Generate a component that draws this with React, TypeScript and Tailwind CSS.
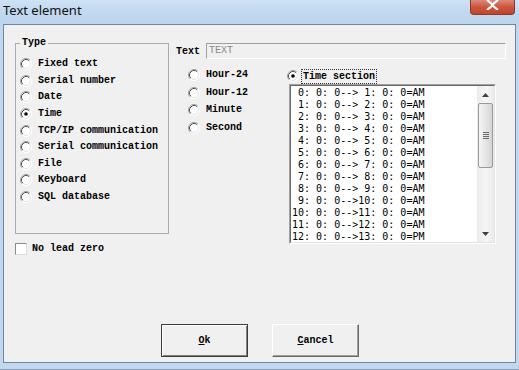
import React from "react";

const mono = "font-['Liberation_Mono',monospace] text-[10px] leading-[12px] text-black font-bold";

function Radio({ checked = false }: { checked?: boolean }) {
  return (
    <svg width="12" height="12" viewBox="0 0 12 12" className="shrink-0">
      <circle cx="6" cy="6" r="5.5" fill="#ffffff" />
      <path d="M2.11 9.89 A5.5 5.5 0 0 1 9.89 2.11" fill="none" stroke="#a0a0a0" strokeWidth="1" />
      <path d="M9.89 2.11 A5.5 5.5 0 0 1 2.11 9.89" fill="none" stroke="#ffffff" strokeWidth="1" />
      <path d="M2.82 9.18 A4.5 4.5 0 0 1 9.18 2.82" fill="none" stroke="#505050" strokeWidth="1" />
      <path d="M9.18 2.82 A4.5 4.5 0 0 1 2.82 9.18" fill="none" stroke="#e3e3e3" strokeWidth="1" />
      {checked && <circle cx="6" cy="6" r="1.8" fill="#000000" />}
    </svg>
  );
}

function RadioRow({ label, checked = false, h }: { label: string; checked?: boolean; h: string }) {
  return (
    <div className={`flex items-center ${h}`}>
      <Radio checked={checked} />
      <span className={`${mono} ml-[6px] whitespace-pre`}>{label}</span>
    </div>
  );
}

const types = [
  "Fixed text",
  "Serial number",
  "Date",
  "Time",
  "TCP/IP communication",
  "Serial communication",
  "File",
  "Keyboard",
  "SQL database",
];

const pad = (n: number) => (n < 10 ? " " + n : "" + n);
const rows = Array.from({ length: 13 }, (_, i) =>
  `${pad(i)}: 0: 0-->${pad(i + 1)}: 0: 0=${i + 1 <= 12 ? "AM" : "PM"}`
);

function Arrow({ up }: { up: boolean }) {
  return (
    <svg width="7" height="4" viewBox="0 0 7 4">
      {up ? <path d="M0 4 L3.5 0 L7 4 Z" fill="#404040" /> : <path d="M0 0 L3.5 4 L7 0 Z" fill="#404040" />}
    </svg>
  );
}

export default function App() {
  return (
    <div className="w-[519px] h-[370px] bg-[#c3d8ee] flex flex-col overflow-hidden border-b border-[#8aa2bc]">
      {/* title bar */}
      <div className="h-[24px] shrink-0 flex items-start bg-gradient-to-b from-[#cfe2f6] via-[#c1d8f0] to-[#bdd4ed]">
        <span className="pl-[3px] pt-[2px] text-[13px] leading-[17px] font-['Noto_Sans',sans-serif] text-[#111]">
          Text element
        </span>
        <div className="ml-auto mr-[4px] w-[45px] h-[15px] rounded-b-[4px] border border-t-0 border-[#8b3b2e] bg-gradient-to-b from-[#dc8878] via-[#cc5540] to-[#c0432c] flex items-start justify-center">
          <svg width="13" height="10" viewBox="0 0 13 10">
            <path d="M1 0 L6.5 4.5 L12 0 M1 10 L6.5 5.5 L12 10" stroke="#ffffff" strokeWidth="2.2" fill="none" />
          </svg>
        </div>
      </div>

      {/* client area */}
      <div className="mx-[3px] h-[339px] shrink-0 border border-[#6d87a3] bg-[#f0f0f0] flex flex-col">
        <div className="flex items-start pl-[11px]">
          {/* left column */}
          <div className="mt-[12px] flex flex-col w-[154px]">
            <fieldset className="w-[154px] h-[197px] border border-[#a9adb2]">
              <legend className={`${mono} ml-[4px] px-[2px]`}>Type</legend>
              <div className="pt-[7px] pl-[4px] flex flex-col">
                {types.map((t) => (
                  <RadioRow key={t} label={t} checked={t === "Time"} h="h-[16.6px]" />
                ))}
              </div>
            </fieldset>
            <div className="mt-[9px] flex items-center h-[12px]">
              <div className="w-[12px] h-[12px] bg-white border-t border-l border-[#8a8a8a] border-b border-r border-b-[#dcdcdc] border-r-[#dcdcdc]" />
              <span className={`${mono} ml-[5px]`}>No lead zero</span>
            </div>
          </div>

          {/* right column */}
          <div className="mt-[18px] ml-[7px] flex flex-col">
            <div className="flex items-center h-[16px]">
              <span className={`${mono} w-[30px] pt-[1px]`}>Text</span>
              <div className="w-[300px] h-[16px] border-t border-l border-[#a0a0a0] border-b border-r border-b-[#ffffff] border-r-[#ffffff] bg-[#f0f0f0] flex items-center">
                <span className="font-['Liberation_Mono',monospace] text-[10px] leading-[12px] text-[#8a8a8a] pl-[2px]">
                  TEXT
                </span>
              </div>
            </div>

            <div className="flex items-start">
              <div className="w-[111px] pl-[12px] pt-[7px] flex flex-col">
                {["Hour-24", "Hour-12", "Minute", "Second"].map((t) => (
                  <RadioRow key={t} label={t} h="h-[17.7px]" />
                ))}
              </div>
              <div className="flex flex-col pt-[9px]">
                <div className="flex items-center h-[16px]">
                  <Radio checked />
                  <span className={`${mono} ml-[2px] border border-dotted border-[#333] px-[1px] leading-[13px]`}>
                    Time section
                  </span>
                </div>
                <div className="ml-[2px] w-[207px] h-[160px] border-t border-l border-[#a0a0a0] border-b border-r border-b-white border-r-white">
                  <div className="w-full h-full border-t border-l border-[#696969] border-b border-r border-b-[#e3e3e3] border-r-[#e3e3e3] bg-white flex">
                    <div className="flex-1 pl-[1px] pt-[1px] flex flex-col overflow-hidden">
                      {rows.map((r, i) => (
                        <div
                          key={i}
                          className="font-['DejaVu_Sans_Mono',monospace] text-[10px] leading-[12px] h-[12px] whitespace-pre text-black"
                        >
                          {r}
                        </div>
                      ))}
                    </div>
                    <div className="w-[17px] h-full flex flex-col bg-gradient-to-r from-[#ebebeb] via-[#f6f6f6] to-[#ebebeb]">
                      <div className="h-[17px] flex items-center justify-center">
                        <Arrow up />
                      </div>
                      <div className="mx-[1px] h-[65px] rounded-[2px] border border-[#9a9a9a] bg-gradient-to-r from-[#f4f4f4] via-[#e6e6e6] to-[#d4d4d4] flex flex-col items-center justify-center gap-[1px]">
                        {[0, 1, 2, 3].map((k) => (
                          <div key={k} className="w-[6px] h-[1px] bg-[#6a6a6a]" />
                        ))}
                      </div>
                      <div className="flex-1" />
                      <div className="h-[17px] flex items-center justify-center">
                        <Arrow up={false} />
                      </div>
                    </div>
                  </div>
                </div>
              </div>
            </div>
          </div>
        </div>

        {/* buttons */}
        <div className="mt-auto mb-[5px] pl-[157px] flex gap-[24px]">
          <div className="w-[87px] h-[33px] border border-[#3c3c3c] bg-[#f0f0f0] shadow-[inset_1px_1px_0_#ffffff,inset_-1px_-1px_0_#808080] flex items-center justify-center">
            <span className={mono}>
              <span className="underline">O</span>k
            </span>
          </div>
          <div className="w-[87px] h-[33px] border border-[#ffffff] border-b-[#696969] border-r-[#696969] bg-[#f0f0f0] shadow-[inset_-1px_-1px_0_#a0a0a0] flex items-center justify-center">
            <span className={mono}>
              <span className="underline">C</span>ancel
            </span>
          </div>
        </div>
      </div>
    </div>
  );
}
